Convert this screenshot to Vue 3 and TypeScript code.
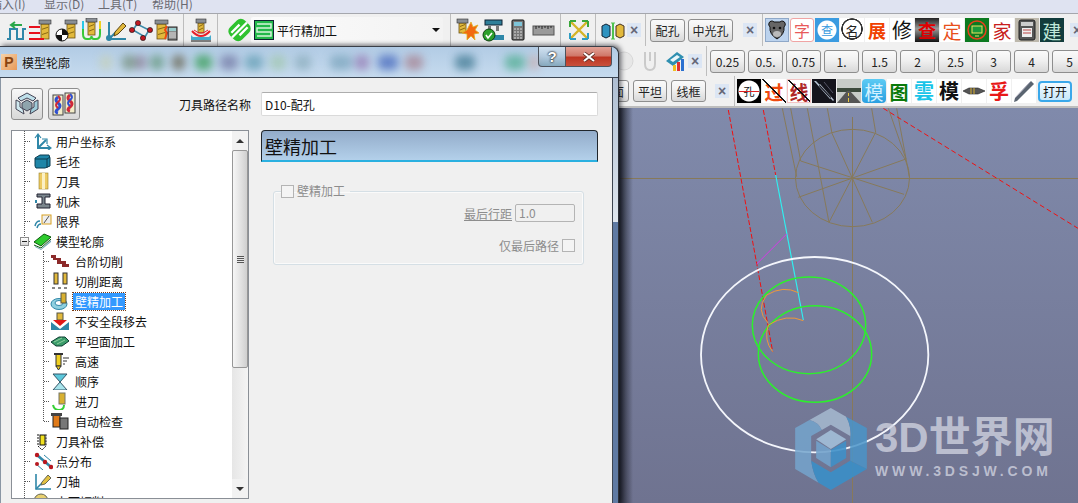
<script setup lang="ts">
// CAM toolpath dialog over a wireframe viewport.
interface Stamp {
  text?: string;
  cls?: string;
  svg?: string;
}

interface TreeRow {
  label: string;
  icon: string;
  level: 1 | 2;
  open?: boolean;
  selected?: boolean;
}

const gold = "#e2b93c";
const mill = (x: number, y: number, w: number, h: number) =>
  `<rect x="${x}" y="${y}" width="${w}" height="${h}" fill="${gold}" stroke="#6b5212" stroke-width=".8"/>` +
  `<path d="M${x + 1} ${y + h * 0.35}l${w - 2} -2M${x + 1} ${y + h * 0.7}l${w - 2} -2" stroke="#8a6a12" stroke-width="1"/>` +
  `<rect x="${x - 2}" y="${y - 4}" width="${w + 4}" height="4" fill="#8a8f94" stroke="#333" stroke-width=".6"/>`;
const calc =
  '<rect x="14" y="9" width="9" height="13" fill="#8c8c8c" stroke="#222"/><rect x="15" y="10" width="7" height="3" fill="#9cc"/><path d="M15 15h7M15 17h7M15 19h7" stroke="#ddd"/>';

const row1Tools: string[] = [
  '<path d="M3 21h3V11h7v10h6V11h3" fill="none" stroke="#2f87a8" stroke-width="2"/><path d="M18 7H8M11 4 7 7l4 3" fill="none" stroke="#2aa84a" stroke-width="2"/>',
  mill(12, 6, 8, 15) + '<path d="M0 9h11M0 15h11M0 21h15" stroke="#e8101c" stroke-width="2"/>',
  mill(13, 6, 8, 14) + '<circle cx="8" cy="17" r="6" fill="#fff" stroke="#111"/><path d="M8 11a6 6 0 0 1 6 6H8zM8 17v6a6 6 0 0 1-6-6z" fill="#111"/>',
  mill(9, 4, 7, 13) + '<path d="M4 3v13q0 5 4 5h2q2.500 0 2.500-3 0 3 2.500 3h2q4 0 4-5V3" fill="none" stroke="#38c838" stroke-width="2"/><path d="M4 3v8" stroke="#2ac8e8" stroke-width="2"/><path d="M21 3v8" stroke="#f0d020" stroke-width="2"/>',
  '<path d="M5 4v17h17" fill="none" stroke="#2f87a8" stroke-width="2"/><path d="M5 21 13 13" stroke="#2f87a8" stroke-width="2"/><circle cx="5" cy="20" r="3" fill="#2f87a8"/><path d="M11 14l8-9 3 3-8 8-4 2z" fill="#e2b93c" stroke="#5a4410"/>',
  '<path d="M8 6 4 12l12 7 4-7z" fill="none" stroke="#3d8aa8" stroke-width="1.600"/><g fill="#c01820" stroke="#111" stroke-width=".6"><circle cx="9" cy="5" r="2.600"/><circle cx="3" cy="12" r="2.600"/><circle cx="21" cy="12" r="2.600"/><circle cx="14" cy="20" r="2.600"/></g>',
  mill(3, 6, 9, 15) + '<path d="M13 8l-2 4 2 3-2 6" stroke="#f04a10" stroke-width="2" fill="none"/>' + calc,
];
const pocketIcon =
  mill(9, 5, 6, 10) + '<path d="M3 13q9 10 18 0" fill="none" stroke="#e8202a" stroke-width="2"/><path d="M5 12q7 6 14 0" fill="none" stroke="#e8202a"/><path d="M2 22h20v-5l-2 2H4l-2-2z" fill="#44aacc"/><path d="M2 23h20" stroke="#111"/>';
const stripesIcon =
  '<g transform="rotate(-45 12 12)"><rect x="1" y="3" width="22" height="18" rx="6" fill="#2fc22f"/><path d="M4 8h12a3 3 0 0 1 0 0M8 16h12M1 12h22" stroke="#fff" stroke-width="2.400"/></g>';
const row1Right: string[] = [
  mill(3, 5, 7, 10) + '<path d="m15 4 2 5 5-2-3 5 4 3-5 1 1 6-4-4-4 4 0-6-5-1 5-3z" fill="#f26a10" stroke="#e0b020" stroke-width=".8"/>',
  '<rect x="4" y="2" width="17" height="5" fill="#2f7f99" stroke="#123"/><path d="M7 8h3v5H7zM15 8h3v5h-3z" fill="#777"/><rect x="3" y="17" width="20" height="5" fill="#2f87a8"/><circle cx="8" cy="17" r="6" fill="#2da02d" stroke="#104010"/><path d="m5 17 2 3 4-5" fill="none" stroke="#fff" stroke-width="1.600"/>',
  '<rect x="6" y="2" width="12" height="20" rx="1" fill="#777" stroke="#111"/><rect x="8" y="4" width="8" height="4" fill="#7ec4d8"/><path d="M8 11h8M8 14h8M8 17h8M8 20h8" stroke="#ddd" stroke-dasharray="2 1"/>',
  '<rect x="2" y="8" width="21" height="9" fill="#9a9a9a" stroke="#555"/><path d="M5 8v3M8 8v2M11 8v3M14 8v2M17 8v3M20 8v2" stroke="#222"/>',
];
const arrowsIcon =
  '<path d="M3 3 21 21M21 3 3 21" stroke="#d4b428" stroke-width="2.400"/><path d="M3 3v6M3 3h6" stroke="#3aa83a" stroke-width="2"/><path d="M21 3v6M21 3h-6" stroke="#3aa83a" stroke-width="2"/><path d="M21 21v-6M21 21h-6" stroke="#2f9ec4" stroke-width="2"/><path d="M3 21v-6M3 21h6" stroke="#2f9ec4" stroke-width="2"/>';
const boxesIcon =
  '<path d="M1 8l4-2 4 2v10l-4 2-4-2z" fill="#2f93c0" stroke="#123"/><path d="M15 8l4-2 4 2v10l-4 2-4-2z" fill="#e2b93c" stroke="#432"/><path d="M12 5v16" stroke="#4ec24e" stroke-width="2"/><path d="M10 5h4M10 21h4" stroke="#4ec24e"/>';

const row1Stamps: Stamp[] = [
  {
    cls: "s-bear",
    svg: '<path d="M4 5a3 3 0 0 1 5-1h6a3 3 0 0 1 5 1q1 2-1 4 1 7-7 12Q4 16 5 9 3 7 4 5z" fill="#666" stroke="#111"/><ellipse cx="12" cy="16" rx="4" ry="3" fill="#bbb"/><circle cx="9" cy="10" r="1.300" fill="#111"/><circle cx="15" cy="10" r="1.300" fill="#111"/>',
  },
  { text: "字", cls: "s-zi" },
  { text: "查", cls: "s-cha" },
  { text: "名", cls: "s-ming" },
  { text: "展", cls: "s-zhan" },
  { text: "修", cls: "s-xiu" },
  { text: "查", cls: "s-cha2" },
  { text: "定", cls: "s-ding" },
  {
    cls: "s-monitor",
    svg: '<rect width="24" height="24" fill="#0c7a20"/><circle cx="12" cy="12" r="9" fill="none" stroke="#e8401c" stroke-width="1.500"/><rect x="7" y="8" width="10" height="7" fill="#1b9a3a" stroke="#f0e060"/><path d="M10 18h4" stroke="#f0e060"/>',
  },
  { text: "家", cls: "s-jia" },
  {
    cls: "s-printer",
    svg: '<rect width="24" height="24" fill="#bdb8ac"/><rect x="4" y="2" width="16" height="20" rx="2" fill="#555" stroke="#222"/><rect x="6" y="4" width="12" height="4" fill="#ccc"/><rect x="7" y="10" width="10" height="9" fill="#eee"/><path d="M8 12h8M8 15h8" stroke="#b44"/>',
  },
  { text: "建", cls: "s-jian" },
];

const row3Stamps: Stamp[] = [
  { text: "孔", cls: "s-kong" },
  { text: "过", cls: "s-guo" },
  { text: "线", cls: "s-xian" },
  {
    cls: "s-dark",
    svg: '<rect width="24" height="24" fill="#14141c"/><path d="M2 2 18 20l1-2L4 2zM8 5l14 16-1 1L7 7z" fill="#b8c4d4"/><path d="M12 3 21 14" stroke="#556"/>',
  },
  {
    cls: "s-dark",
    svg: '<rect width="24" height="24" fill="#c8ccc8"/><rect y="9" width="24" height="4" fill="#3c4a3c"/><path d="M0 24 10 12h3l11 12z" fill="#555"/><path d="M11.500 14v3M11.500 19v4" stroke="#e8c840"/>',
  },
  { text: "模", cls: "s-mo" },
  { text: "图", cls: "s-tu" },
  { text: "雲", cls: "s-yun" },
  { text: "模", cls: "s-mo2" },
  {
    svg: '<rect width="24" height="24" fill="#fff"/><path d="M1 12l6-3h9l7 3-7 3H7z" fill="#555" stroke="#222" stroke-width=".6"/><path d="M9 9v6M12 9v6" stroke="#d8b030"/>',
  },
  { text: "孚", cls: "s-fu" },
  {
    svg: '<rect width="24" height="24" fill="#fff"/><path d="M19 2l3 3L5 22l-3 1 1-4z" fill="#5a6470"/><path d="M18 3 3 19" stroke="#aab"/>',
  },
];

const fineIcons: Record<string, string> = {
  axes: '<path d="M6 3v13h12" fill="none" stroke="#2f87a8" stroke-width="2"/><path d="M6 16 14 8" stroke="#2f87a8" stroke-width="2"/><path d="M3 6l3-4 3 4M15 13l4 3-4 3M10 7h5v5" fill="none" stroke="#2f87a8" stroke-width="1.200"/>',
  block: '<path d="M3 6l5-3h9l1 3v8l-5 2H4l-1-2z" fill="#1f86a8" stroke="#0c3c50"/><path d="M3 7h12l3-2M15 7v9" stroke="#0c3c50" fill="none"/>',
  cyl: '<rect x="7" y="1" width="9" height="16" fill="#edca62" stroke="#99802a" stroke-width=".6"/><rect x="10" y="1" width="3" height="16" fill="#fbf0c4"/>',
  lathe: '<path d="M5 2h13v3h-5v7h5v4H5v-4h5V5H5z" fill="#7a858c" stroke="#223"/><path d="M4 8v3" stroke="#2f87a8" stroke-width="2"/>',
  bound: '<rect x="10" y="3" width="9" height="9" fill="#eee" stroke="#d8a020"/><path d="M12 11l5-7" stroke="#555"/><path d="M3 14q1-5 5-5M5 16q1-4 4-4" fill="none" stroke="#2f87a8" stroke-width="1.500"/>',
  stack: '<path d="M2 10 12 2l7 3-10 9z" fill="#2ecb2e" stroke="#0c5a0c"/><path d="M2 13l7 3 10-9" fill="none" stroke="#0c5a0c"/><path d="M3 14l6 3 10-9v2L9 18l-6-3z" fill="#79a8b8"/>',
  steps: '<path d="M1 3h5v3h5v3h5v3h3v3h-7v-3H7V8H3V6H1z" fill="#8c2a2a"/>',
  gap: '<rect x="4" y="1" width="4" height="11" fill="#e2b93c" stroke="#333"/><rect x="13" y="1" width="4" height="11" fill="#e2b93c" stroke="#333"/><path d="M2 16h17" stroke="#111" stroke-dasharray="3 3"/>',
  wall: '<ellipse cx="9" cy="12" rx="8" ry="5.500" fill="#8fd0e0" stroke="#2f87a8"/><ellipse cx="9" cy="11" rx="4" ry="2.500" fill="#fff" stroke="#2f87a8"/><rect x="11" y="1" width="5" height="10" fill="#d8b030" stroke="#554"/>',
  unsafe: '<rect x="7" y="1" width="6" height="7" fill="#e2b93c" stroke="#554"/><path d="M3 8h14l-7 6z" fill="#e01818"/><path d="M1 10v8h18v-8l-9 7z" fill="#2f87a8"/>',
  flat: '<path d="M1 10 9 5h6l4 4-7 5H6z" fill="#3a9c6a" stroke="#0c3c30"/><path d="M4 10l8-4M7 12l8-4" stroke="#8fd0a0"/>',
  fast: '<rect x="6" y="2" width="5" height="12" fill="#f0d020" stroke="#333"/><path d="M6 14l2.500 4 2.500-4z" fill="#f0d020" stroke="#333"/><path d="M4 2h9" stroke="#333" stroke-width="2"/><path d="M13 6h6M13 9h4M13 12h2" stroke="#333"/>',
  order: '<path d="M3 2h14l-7 8z" fill="#5cc8dc" stroke="#356"/><path d="M3 18h14l-7-8z" fill="#a8e4ec" stroke="#356"/>',
  lead: '<rect x="9" y="1" width="6" height="11" fill="#d8b030" stroke="#776"/><path d="M3 13q1 5 6 5t5-5" fill="none" stroke="#36d036" stroke-width="2"/>',
  check: '<rect x="3" y="2" width="7" height="13" fill="#e07a18" stroke="#222"/><rect x="1" y="1" width="11" height="3" fill="#444"/><rect x="10" y="6" width="8" height="11" fill="#777" stroke="#222"/>',
  comp: '<rect x="8" y="3" width="5" height="10" fill="#f0e020" stroke="#111"/><path d="M6 2v12l4 4 4-4V2" fill="none" stroke="#111" stroke-dasharray="2 1"/>',
  points: '<path d="M5 3l14 12" stroke="#2f87a8" stroke-width="2.600"/><path d="M4 12l7 6M12 3l7 6" stroke="#2f87a8" stroke-width="1"/><g fill="#b81820"><circle cx="5" cy="3" r="2.200"/><circle cx="13" cy="10" r="2.200"/><circle cx="19" cy="15" r="2.200"/><circle cx="5" cy="12" r="2"/></g>',
  axis: '<path d="M4 2v15h15" fill="none" stroke="#2f87a8" stroke-width="1.600"/><path d="M4 17 12 9" stroke="#2f87a8" stroke-width="1.600"/><path d="M10 10l6-7 3 3-6 6-4 1z" fill="#e2c040" stroke="#665"/>',
  cut: '<circle cx="9" cy="9" r="7" fill="#e8d070" stroke="#665"/>',
};

const tree: TreeRow[] = [
  { label: "用户坐标系", icon: "axes", level: 1 },
  { label: "毛坯", icon: "block", level: 1 },
  { label: "刀具", icon: "cyl", level: 1 },
  { label: "机床", icon: "lathe", level: 1 },
  { label: "限界", icon: "bound", level: 1 },
  { label: "模型轮廓", icon: "stack", level: 1, open: true },
  { label: "台阶切削", icon: "steps", level: 2 },
  { label: "切削距离", icon: "gap", level: 2 },
  { label: "壁精加工", icon: "wall", level: 2, selected: true },
  { label: "不安全段移去", icon: "unsafe", level: 2 },
  { label: "平坦面加工", icon: "flat", level: 2 },
  { label: "高速", icon: "fast", level: 2 },
  { label: "顺序", icon: "order", level: 2 },
  { label: "进刀", icon: "lead", level: 2 },
  { label: "自动检查", icon: "check", level: 2 },
  { label: "刀具补偿", icon: "comp", level: 1 },
  { label: "点分布", icon: "points", level: 1 },
  { label: "刀轴", icon: "axis", level: 1 },
  { label: "上下切削", icon: "cut", level: 1 },
];

// blurred toolbar seen through the glass title bar: left, width, colour
const glass: [number, number, string][] = [
  [100, 12, "#c4d0bc"], [122, 14, "#7a9484"], [136, 10, "#8d7f98"], [150, 14, "#6a9a84"],
  [172, 13, "#6b6a58"], [195, 17, "#3fa060"], [220, 18, "#7880aa"], [245, 18, "#6aa2b8"],
  [270, 16, "#a4c8b4"], [295, 16, "#8fb0c0"], [330, 22, "#80a8c0"], [355, 14, "#9880b8"],
  [378, 20, "#4f70c0"], [405, 18, "#a88898"], [455, 20, "#487f98"], [505, 20, "#58b098"],
  [530, 8, "#c8a8a8"],
];

const zoomButtons = ["0.25", "0.5.", "0.75", "1.", "1.5", "2", "2.5", "3", "4", "5"];
</script>

<template>
  <div class="screen">
    <div class="menubar">
      <span>插入(I)</span>
      <span>显示(D)</span>
      <span>工具(T)</span>
      <span>帮助(H)</span>
    </div>

    <div class="toolrow">
      <div class="group g1">
        <svg v-for="(body, i) in row1Tools" :key="i" class="cell" viewBox="0 0 24 24" v-html="body" />
      </div>
      <div class="group g2">
        <svg class="cell" viewBox="0 0 24 24" v-html="pocketIcon" />
      </div>
      <div class="group g3">
        <svg class="cell narrow" viewBox="0 0 24 24" v-html="stripesIcon" />
        <div class="combo">
          <svg class="combo-icon" viewBox="0 0 20 20">
            <rect x=".5" y=".5" width="19" height="19" fill="#22b84a" stroke="#123" />
            <path d="M3 4h14v4H3v4h14v4H3" fill="none" stroke="#d8f4dc" stroke-width="1.500" />
          </svg>
          <span class="combo-text">平行精加工</span>
          <i class="combo-arrow"></i>
        </div>
      </div>
      <div class="group g4">
        <svg v-for="(body, i) in row1Right" :key="i" class="cell" viewBox="0 0 24 24" v-html="body" />
      </div>
      <div class="group g5">
        <svg class="cell" viewBox="0 0 24 24" v-html="arrowsIcon" />
      </div>
      <div class="group g6">
        <svg class="cell" viewBox="0 0 24 24" v-html="boxesIcon" />
        <span class="close-x">×</span>
      </div>
      <div class="group g7">
        <button class="tbtn w35">配孔</button>
        <button class="tbtn w45">中光孔</button>
        <span class="close-x">×</span>
      </div>
      <div class="group g8">
        <div v-for="(s, i) in row1Stamps" :key="i" class="stamp" :class="s.cls">
          <svg v-if="s.svg" viewBox="0 0 24 24" v-html="s.svg" />
          <template v-else>{{ s.text }}</template>
        </div>
        <span class="close-x">×</span>
      </div>
    </div>

    <div class="toolrow row2">
      <svg class="cell faded" viewBox="0 0 24 24">
        <circle cx="11" cy="12" r="9" fill="#e4e4e4" stroke="#ccc" />
      </svg>
      <svg class="cell faded" viewBox="0 0 24 24">
        <path d="M7 3v12q0 6 5 6t5-6V3M12 12V3" fill="none" stroke="#bbb" stroke-width="2" />
      </svg>
      <svg class="cell" viewBox="0 0 24 24">
        <path d="M3 12 14 3l7 5-11 9z" fill="#2f8fb0" />
        <path d="M7 11l7-5 3 2-7 5z" fill="#eaf6fa" />
        <rect x="10" y="16" width="3" height="6" fill="#f0c020" />
        <rect x="14" y="13" width="3" height="9" fill="#e03030" />
        <rect x="18" y="10" width="3" height="12" fill="#2a70d0" />
      </svg>
      <span class="close-x">×</span>
      <i class="rule"></i>
      <button v-for="z in zoomButtons" :key="z" class="tbtn w35 wide-gap">{{ z }}</button>
    </div>

    <div class="toolrow row3">
      <button class="tbtn flat-btn">平面</button>
      <button class="tbtn w34">平坦</button>
      <button class="tbtn w35">线框</button>
      <span class="close-x">×</span>
      <i class="rule"></i>
      <div v-for="(s, i) in row3Stamps" :key="i" class="stamp" :class="s.cls">
        <svg v-if="s.svg" viewBox="0 0 24 24" v-html="s.svg" />
        <template v-else>{{ s.text }}</template>
      </div>
      <button class="tbtn open-btn">打开</button>
    </div>

    <div class="viewport">
      <svg class="wire" viewBox="0 0 1078 395">
        <g transform="translate(620 -8) scale(.33333)" fill="none" stroke-width="3">
          <g stroke="#87795a" shape-rendering="crispEdges">
            <path d="M0 235H1374M697 50V1209" />
          </g>
          <g stroke="#87795a">
            <ellipse cx="697.500" cy="234" rx="171" ry="146" />
            <path d="M636 100 757 367M767 97 627 367M858 177 535 292M542 183 852 283" />
            <path d="M487 25 530 230M512 25 542 183M562 25 627 367M622 25 636 100M755 25 767 97M805 25 858 177M830 25 868 230" />
          </g>
          <path d="M325 30 410 490 458 755M430 30 467 225" stroke="#f01010" stroke-dasharray="15 6" />
          <path d="M790 25 1374 385" stroke="#f01010" stroke-dasharray="15 9" />
          <path d="M467 225 550 660" stroke="#2ff0f0" stroke-width="3.500" />
          <path d="M500 402 410 492" stroke="#d838e8" />
          <ellipse cx="584" cy="764" rx="341" ry="293" stroke="#f4f6fc" stroke-width="5.500" />
          <ellipse cx="567" cy="676" rx="170" ry="145" stroke="#2cf02c" stroke-width="4.500" />
          <ellipse cx="585" cy="762" rx="170" ry="145" stroke="#2cf02c" stroke-width="4.500" />
          <path d="M550 662Q500 640 445 675 430 720 458 755M535 578Q490 555 440 585 405 630 445 670" stroke="#f09838" />
        </g>
      </svg>
      <div class="shade"></div>
      <div class="watermark">
        <svg class="wm-logo" viewBox="15 12 215 246">
          <path d="M58 48 122 12 168 38Q186 70 180 110V96L122 62 95 78Q85 55 58 48Z" fill="#a6bad0" fill-opacity=".85" />
          <path d="M15 72 58 48Q85 55 95 78L63 96V170Q68 208 85 236L15 195Z" fill="#74a4cc" fill-opacity=".85" />
          <path d="M168 38 230 72V195L180 170V110Q186 70 168 38Z" fill="#4a94c8" fill-opacity=".85" />
          <path d="M122 258 85 236Q68 208 63 170L122 205 180 170 230 195Z" fill="#3a8fc8" fill-opacity=".9" />
          <path d="M122 78 168 106 122 135 78 106Z" fill="#a3bfd8" fill-opacity=".9" />
          <path d="M78 110 122 137V190L78 162Z" fill="#72a2cb" fill-opacity=".9" />
          <path d="M168 110 122 137V190L168 162Z" fill="#3f90c8" fill-opacity=".9" />
        </svg>
        <div class="wm-text">
          <div class="wm-title">3D世界网</div>
          <div class="wm-url">WWW.3DSJW.COM</div>
        </div>
      </div>
    </div>

    <section class="dialog">
      <header class="titlebar">
        <div class="glass">
          <i
            v-for="(g, i) in glass"
            :key="i"
            :style="{ left: g[0] + 'px', width: g[1] + 'px', background: g[2] }"
          ></i>
        </div>
        <span class="app-icon">P</span>
        <span class="title">模型轮廓</span>
        <div class="caption">
          <button class="cap-help">?</button>
          <button class="cap-close">
            <svg viewBox="0 0 14 10" width="14" height="10">
              <path d="M2 1 12 9M12 1 2 9" stroke="#5a2a20" stroke-width="3.600" />
              <path d="M2 1 12 9M12 1 2 9" stroke="#fff" stroke-width="2.200" />
            </svg>
          </button>
        </div>
      </header>

      <div class="body">
        <div class="top">
          <button class="square">
            <svg viewBox="0 0 26 26" width="26" height="26">
              <path d="M13 2 22 7l-3 3-6-3-6 3-3-3z" fill="#bfe0ea" stroke="#445" />
              <path d="M24 9v9l-8 5 1-5 3-2V11z" fill="#9fcbd8" stroke="#445" />
              <path d="M2 9v9l8 5-1-5-3-2V11z" fill="#cfe8ee" stroke="#445" />
              <path d="M13 9l5 3v5l-5 3-5-3v-5z" fill="#8ea4ac" stroke="#445" />
            </svg>
          </button>
          <button class="square">
            <svg viewBox="0 0 26 26" width="26" height="26">
              <rect x="2" y="4" width="10" height="20" fill="#f2ecc8" stroke="#444" />
              <rect x="14" y="2" width="10" height="20" fill="#f2ecc8" stroke="#444" />
              <path d="M7 6q-4 3 0 6t0 6 0 4" fill="none" stroke="#3050d0" stroke-width="3" />
              <path d="M7 5q4 3 0 6t0 6" fill="none" stroke="#d02838" stroke-width="2" />
              <path d="M19 4q-4 3 0 6t0 6 0 4" fill="none" stroke="#d02838" stroke-width="3" />
              <path d="M19 3q4 3 0 6t0 6" fill="none" stroke="#3050d0" stroke-width="2" />
            </svg>
          </button>
          <label class="name-label">刀具路径名称</label>
          <input class="name-input" value="D10-配孔" />
        </div>

        <div class="columns">
          <div class="tree">
            <div class="tree-list">
              <i class="vline v1"></i>
              <i class="vline v2"></i>
              <div
                v-for="row in tree"
                :key="row.label"
                class="tree-row"
                :class="`level-${row.level}`"
              >
                <i v-if="row.open" class="expander"></i>
                <svg class="tree-icon" viewBox="0 0 20 18" v-html="fineIcons[row.icon]" />
                <span class="tree-label" :class="{ selected: row.selected }">{{ row.label }}</span>
              </div>
            </div>
            <div class="scrollbar">
              <div class="sb-btn"><i class="tri up"></i></div>
              <div class="thumb"><i class="grip"></i></div>
              <div class="sb-track"></div>
              <div class="sb-btn"><i class="tri down"></i></div>
            </div>
          </div>

          <div class="pane">
            <h2 class="pane-head">壁精加工</h2>
            <fieldset class="group-box">
              <legend><i class="check"></i>壁精加工</legend>
              <div class="field first">
                <u>最后行距</u>
                <span class="num">1.0</span>
              </div>
              <div class="field second">
                <span>仅最后路径</span>
                <i class="check"></i>
              </div>
            </fieldset>
          </div>
        </div>
      </div>
    </section>
  </div>
</template>

<style>
html,
body {
  margin: 0;
  background: #6f7490;
}
</style>

<style scoped>
.screen {
  position: relative;
  width: 1078px;
  height: 503px;
  overflow: hidden;
  display: flex;
  flex-direction: column;
  font-family: "Noto Sans CJK SC", "Liberation Sans", sans-serif;
  font-size: 12px;
  color: #111;
  background: #f0f0f0;
}

.menubar {
  height: 13px;
  flex: none;
  display: flex;
  overflow: hidden;
  background: #dfe3f1;
  border-bottom: 1px solid #a5a7ad;
  color: #6a6a72;
  margin-left: -10px;
  line-height: 8px;
}
.menubar span {
  width: 54px;
  white-space: nowrap;
}

.toolrow {
  height: 32px;
  flex: none;
  display: flex;
  align-items: center;
  background: #f0f0f0;
}
.group {
  height: 100%;
  display: flex;
  align-items: center;
  flex: none;
  border-right: 1px solid #bdbdbd;
  box-sizing: content-box;
}
.g1 { padding: 0 4px; }
.g2 { padding: 0 3px 0 5px; }
.g3 { padding: 0 7px 0 10px; }
.g4 { padding: 0 4px 0 5px; }
.g5 { padding: 0 3px 0 6px; }
.g6 { padding: 0 4px 0 5px; }
.g7 { padding: 0 5px 0 4px; }
.g8 { padding: 0 0 0 2px; border-right: 0; }
.g6 .close-x { margin-left: 1px; }
.g7 .close-x { margin-left: 10px; }
.g8 .close-x { margin-left: 5px; flex: none; }
.g7 .tbtn + .tbtn { margin-left: 3px; }

.cell {
  width: 24px;
  height: 24px;
  margin-right: 1px;
  flex: none;
}
.cell.narrow {
  width: 23px;
  margin: 0;
}
.faded {
  opacity: .7;
}

.combo {
  width: 192px;
  height: 26px;
  display: flex;
  align-items: center;
  background: linear-gradient(90deg, #fbfbfb, #f3f3f3);
  border-radius: 2px;
}
.combo-icon {
  width: 20px;
  height: 20px;
  margin-left: 3px;
  flex: none;
}
.combo-text {
  margin-left: 3px;
  flex: 1;
  color: #111;
}
.combo-arrow {
  width: 0;
  height: 0;
  margin-right: 3px;
  border-style: solid;
  border-width: 4px 4px 0;
  border-color: #111 transparent transparent;
}

.close-x {
  width: 14px;
  height: 14px;
  flex: none;
  display: flex;
  align-items: center;
  justify-content: center;
  background: #dce6f4;
  color: #667;
  font: bold 14px/1 "Liberation Sans", sans-serif;
}

.tbtn {
  height: 23px;
  padding: 0;
  flex: none;
  border: 1px solid #8e8e8e;
  border-radius: 3px;
  background: linear-gradient(#fafafa, #f0f0f0 45%, #d8d8d8);
  color: #222;
  font: 12px "Noto Sans CJK SC", "Liberation Sans", sans-serif;
}
.w34 { width: 34px; }
.w35 { width: 35px; }
.w45 { width: 45px; }

.stamp {
  width: 24px;
  height: 24px;
  margin-right: 1px;
  flex: none;
  display: flex;
  align-items: center;
  justify-content: center;
  position: relative;
  box-sizing: border-box;
  background: #fff;
  font-size: 18px;
  line-height: 1;
  overflow: hidden;
}
.stamp svg {
  width: 24px;
  height: 24px;
  flex: none;
}

.s-bear { background: #bcd3ee; outline: 1px solid #8fa8c8; outline-offset: -1px; }
.s-zi { color: #e85a5a; border: 1px solid #f0a4a4; border-radius: 3px; font-size: 16px; }
.s-cha { background: radial-gradient(circle, #fff 0 9px, #3a9be0 10px); color: #3a9be0; font-size: 12px; }
.s-ming { background: radial-gradient(circle at 50% 46%, #fff 0 9px, #333 9.500px 10.500px, #fff 11px); font-size: 13px; color: #222; }
.s-zhan { color: #f04000; font-weight: 700; }
.s-xiu { color: #111; font-size: 20px; }
.s-cha2 { background: linear-gradient(#222, #999 45%, #111); color: #e00000; font-weight: 700; }
.s-ding { color: #e8501c; font-size: 19px; }
.s-jia { color: #c81e1e; font-size: 19px; }
.s-jian { background: #123c3c; color: #bfe8d8; font-size: 19px; }
.s-kong { background: radial-gradient(circle, #fff 0 10px, #000 11px); color: #111; font-size: 11px; }
.s-kong::after {
  content: "";
  position: absolute;
  left: 2px;
  right: 2px;
  top: 12px;
  height: 1px;
  background: #e02020;
}
.s-guo,
.s-xian {
  font-weight: 700;
  font-size: 19px;
}
.s-guo { color: #f04a10; }
.s-xian { color: #b02828; border: 1px solid #f4c4c4; }
.s-guo::after,
.s-xian::after {
  content: "";
  position: absolute;
  inset: 0;
  background: linear-gradient(to top right, transparent 48%, #111 48% 53%, transparent 53%);
}
.s-mo { background: linear-gradient(#5ccbf4, #2a9fe0); color: #d4f2ff; border-radius: 4px; font-size: 19px; }
.s-tu { color: #0a7a0a; font-weight: 700; font-size: 19px; }
.s-yun { color: #18c4e8; font-weight: 700; font-size: 20px; }
.s-mo2 { color: #111; font-weight: 700; font-size: 20px; }
.s-fu { color: #e81818; font-weight: 700; font-size: 20px; }

.row2 {
  height: 30px;
  padding-left: 613px;
}
.rule {
  width: 1px;
  height: 100%;
  flex: none;
  background: #bdbdbd;
  margin: 0 3px 0 4px;
}
.wide-gap {
  margin-right: 3px;
}

.row3 {
  height: 30px;
  padding-left: 595px;
}
.row3 .tbtn {
  height: 22px;
  margin-right: 4px;
}
.flat-btn {
  width: 34px;
}
.row3 .close-x {
  margin-left: 5px;
}
.row3 .rule {
  margin: 0 2px 0 5px;
}
.row3 .open-btn {
  width: 34px;
  height: 21px;
  margin-left: 1px;
  border: 2px solid #3aa8ea;
  border-radius: 4px;
  background: linear-gradient(#f2fbff, #c8e8fb);
  color: #111;
}

.viewport {
  position: relative;
  flex: 1;
  border-top: 2px solid #bdbdbd;
  background: linear-gradient(#808aab, #6f7390);
}
.wire {
  position: absolute;
  inset: 0;
  width: 1078px;
  height: 395px;
}
.shade {
  position: absolute;
  left: 619px;
  top: 0;
  bottom: 0;
  width: 14px;
  background: linear-gradient(90deg, rgba(20, 22, 30, .85), rgba(20, 22, 30, 0));
}

/* free-standing mark over the drawing */
.watermark {
  position: absolute;
  left: 795px;
  top: 300px;
  display: flex;
  gap: 8px;
}
.wm-logo {
  width: 72px;
  height: 82px;
  flex: none;
}
.wm-text {
  margin-top: 10px;
  color: rgba(208, 211, 224, .78);
  font-weight: 700;
}
.wm-title {
  font: 700 42px/40px "Liberation Sans", "Noto Sans CJK SC", sans-serif;
  white-space: nowrap;
}
.wm-url {
  margin-top: 6px;
  font: 700 14px/14px "Liberation Sans", sans-serif;
  letter-spacing: 3.850px;
  white-space: nowrap;
}

/* floating window */
.dialog {
  position: absolute;
  left: 0;
  top: 46px;
  width: 619px;
  height: 457px;
  display: flex;
  flex-direction: column;
  box-sizing: border-box;
  border-top: 1px solid #3a3f48;
  border-right: 1px solid #2c3038;
  border-top-right-radius: 8px;
  background: #b8cde3;
  box-shadow: 2px -1px 5px rgba(10, 12, 20, .6);
}
.dialog::after {
  content: "";
  position: absolute;
  right: 0;
  top: 175px;
  bottom: 0;
  width: 5px;
  background: #5f7aa3;
}
.dialog::before {
  content: "";
  position: absolute;
  right: 0;
  top: 30px;
  height: 145px;
  width: 5px;
  background: linear-gradient(#aebed2, #dfe6ee);
}
.titlebar {
  position: relative;
  height: 30px;
  flex: none;
  display: flex;
  align-items: center;
  overflow: hidden;
  border-top-right-radius: 8px;
  background: linear-gradient(#b2cce5, #c6dbee);
  border-bottom: 1px solid #3c4653;
}
.glass {
  position: absolute;
  inset: 7px 0 6px;
  filter: blur(4px);
  opacity: .8;
}
.glass i {
  position: absolute;
  top: 1px;
  bottom: 1px;
  border-radius: 5px;
}
.app-icon {
  position: relative;
  width: 16px;
  height: 16px;
  margin-left: 1px;
  display: flex;
  align-items: center;
  justify-content: center;
  background: linear-gradient(135deg, #f6d2a8, #e89a58);
  color: #8a4410;
  font: 700 14px/1 "Liberation Sans", sans-serif;
}
.title {
  position: relative;
  margin-left: 5px;
  color: #111;
  text-shadow: 0 0 3px #e8f2fa;
}
.caption {
  position: absolute;
  right: 6px;
  top: 0;
  height: 20px;
  display: flex;
}
.caption button {
  height: 20px;
  padding: 0;
  display: flex;
  align-items: center;
  justify-content: center;
  border: 1px solid #4c525c;
  border-top: 0;
}
.cap-help {
  width: 28px;
  border-radius: 0 0 0 4px;
  background: linear-gradient(rgba(230, 240, 248, .6), rgba(170, 196, 214, .5) 50%, rgba(110, 150, 170, .7));
  color: #fff;
  font: 700 15px/1 "Liberation Sans", sans-serif;
  text-shadow: 0 0 2px #222, 0 0 2px #222;
}
.cap-close {
  width: 46px;
  border-left: 0 !important;
  border-radius: 0 0 4px 0;
  background: linear-gradient(#e2a296, #d0786a 45%, #bd3522 55%, #c8503c);
}

.body {
  position: relative;
  z-index: 1;
  width: 613px;
  flex: 1;
  box-sizing: border-box;
  padding: 10px 0 0 10px;
  background: #f0f0f0;
  border-left: 1px solid #8a96a4;
  border-right: 1px solid #3c4450;
}
.top {
  height: 32px;
  display: flex;
  align-items: center;
  padding-right: 14px;
}
.square {
  width: 32px;
  height: 32px;
  padding: 0;
  margin-right: 5px;
  display: flex;
  align-items: center;
  justify-content: center;
  border: 1px solid #8e8e8e;
  border-radius: 3px;
  background: linear-gradient(#f8f8f8, #d8d8d8);
}
.name-label {
  margin-left: auto;
  margin-right: 10px;
}
.name-input {
  width: 337px;
  height: 24px;
  box-sizing: border-box;
  padding: 0 3px;
  border: 1px solid #dadada;
  border-top-color: #adadad;
  border-radius: 2px;
  background: #fff;
  color: #111;
  font: 12px "Noto Sans CJK SC", "Liberation Sans", sans-serif;
  outline: 0;
}

.columns {
  margin-top: 10px;
  display: flex;
  gap: 12px;
}

.tree {
  width: 238px;
  height: 369px;
  box-sizing: border-box;
  display: flex;
  border: 1px solid #8a8f96;
  background: #fff;
}
.tree-list {
  position: relative;
  flex: 1;
  overflow: hidden;
}
.vline {
  position: absolute;
  width: 0;
  border-left: 1px dotted #555;
}
.v1 { left: 12px; top: 0; bottom: 0; }
.v2 { left: 31px; top: 120px; height: 170px; }

.tree-row {
  position: relative;
  height: 20px;
  display: flex;
  align-items: center;
  white-space: nowrap;
}
.tree-row::before {
  content: "";
  position: absolute;
  top: 10px;
  width: 9px;
  border-top: 1px dotted #555;
}
.level-1 { padding-left: 19px; }
.level-2 { padding-left: 37px; }
.level-1::before { left: 13px; }
.level-2::before { left: 32px; }
.tree-icon {
  position: relative;
  width: 22px;
  height: 18px;
  flex: none;
  background: #fff;
}
.level-1 .tree-label { margin-left: 1px; }
.level-2 .tree-label { margin-left: 2px; }
.tree-label {
  padding: 0 2px;
  height: 17px;
  line-height: 17px;
}
.tree-label.selected {
  background: #3399ff;
  color: #fff;
  outline: 1px dotted #7a3a10;
}
.expander {
  position: absolute;
  z-index: 1;
  left: 8px;
  top: 6px;
  width: 9px;
  height: 9px;
  box-sizing: border-box;
  border: 1px solid #8c8c8c;
  background: linear-gradient(#fff, #d8d8d8);
}
.expander::after {
  content: "";
  position: absolute;
  left: 1px;
  right: 1px;
  top: 3px;
  height: 1px;
  background: #222;
}

.scrollbar {
  width: 16px;
  flex: none;
  display: flex;
  flex-direction: column;
  background: linear-gradient(90deg, #e6e6e6, #f4f4f4);
}
.sb-btn {
  height: 19px;
  flex: none;
  display: flex;
  align-items: center;
  justify-content: center;
  background: #f2f2f2;
}
.tri {
  width: 0;
  height: 0;
  border-style: solid;
  border-color: transparent;
}
.tri.up { border-width: 0 4px 4px; border-bottom-color: #333; }
.tri.down { border-width: 4px 4px 0; border-top-color: #333; }
.thumb {
  height: 218px;
  flex: none;
  box-sizing: border-box;
  display: flex;
  align-items: center;
  justify-content: center;
  border: 1px solid #979797;
  border-radius: 2px;
  background: linear-gradient(90deg, #f6f6f6, #e0e0e0 60%, #cfcfcf);
}
.grip {
  width: 7px;
  height: 7px;
  background: repeating-linear-gradient(#555 0 1px, #e8e8e8 1px 2px);
}
.sb-track {
  flex: 1;
}

.pane {
  width: 337px;
}
.pane-head {
  height: 32px;
  box-sizing: border-box;
  margin: 0;
  padding-left: 3px;
  display: flex;
  align-items: center;
  border: 1px solid #20262c;
  border-bottom: 2px solid #2ab0e0;
  border-radius: 4px 4px 0 0;
  background: linear-gradient(#93acca, #b3d0ea);
  color: #111;
  font-size: 18px;
  font-weight: 400;
}
.group-box {
  width: 311px;
  height: 81px;
  box-sizing: border-box;
  margin: 22px 0 0 12px;
  padding: 0;
  border: 1px solid #d5dfe5;
  border-radius: 3px;
  box-shadow: inset 0 0 0 1px #fafafa;
  color: #8d8d8d;
}
legend {
  margin-left: 7px;
  padding: 0 5px 0 0;
  display: flex;
  align-items: center;
  line-height: 14px;
}
.check {
  width: 13px;
  height: 13px;
  box-sizing: border-box;
  flex: none;
  display: block;
  border: 1px solid #b4b4b4;
  background: #f4f4f4;
}
legend .check {
  margin-right: 3px;
}
.field {
  padding-right: 8px;
  display: flex;
  align-items: center;
  justify-content: flex-end;
  gap: 3px;
}
.field.first {
  margin-top: 6px;
}
.field.second {
  margin-top: 15px;
}
.num {
  width: 60px;
  height: 18px;
  box-sizing: border-box;
  padding-left: 3px;
  border: 1px solid #b4b4b4;
  border-radius: 2px;
  line-height: 16px;
}
</style>
